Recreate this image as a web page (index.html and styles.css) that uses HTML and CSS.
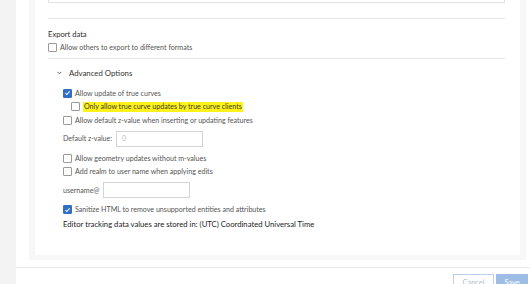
FILE: index.html
```html
<!DOCTYPE html>
<html lang="en">
<head>
  <meta charset="UTF-8" />
  <title>Layer settings</title>
  <link rel="stylesheet" href="styles.css">
</head>
<body>
  <div class="layout">
    <div class="sidebar"></div>

    <div class="main">
      <div class="panel">
        <!-- previous field, scrolled out of view -->
        <div class="field-box"></div>
        <div class="divider first"></div>

        <!-- Export data -->
        <div class="section-title">Export data</div>
        <label class="opt"><span class="box"></span>Allow others to export to different formats</label>
        <div class="divider second"></div>

        <!-- Advanced Options -->
        <div class="adv-head">
          <svg class="chev" width="5" height="4" viewBox="0 0 5 4"><polyline points="0.5,0.8 2.5,2.8 4.5,0.8" fill="none" stroke="#555" stroke-width="0.9"/></svg>
          <span>Advanced Options</span>
        </div>

        <div class="adv">
          <label class="opt r1"><span class="box checked"><svg width="8" height="8" viewBox="0 0 8 8"><polyline points="1.6,4.2 3.2,5.8 6.4,2.2" fill="none" stroke="#fff" stroke-width="1.2"/></svg></span>Allow update of true curves</label>
          <label class="opt sub"><span class="box"></span><span class="hl">Only allow true curve updates by true curve clients</span></label>
          <label class="opt"><span class="box"></span>Allow default z-value when inserting or updating features</label>

          <div class="input-row zrow">
            <span class="input-label">Default z-value:</span>
            <span class="input z"><span class="ph">0</span></span>
          </div>

          <label class="opt mrow"><span class="box"></span>Allow geometry updates without m-values</label>
          <label class="opt"><span class="box"></span>Add realm to user name when applying edits</label>

          <div class="input-row urow">
            <span class="input-label">username@</span>
            <span class="input user"></span>
          </div>

          <label class="opt srow"><span class="box checked"><svg width="8" height="8" viewBox="0 0 8 8"><polyline points="1.6,4.2 3.2,5.8 6.4,2.2" fill="none" stroke="#fff" stroke-width="1.2"/></svg></span>Sanitize HTML to remove unsupported entities and attributes</label>
          <div class="note">Editor tracking data values are stored in: (UTC) Coordinated Universal Time</div>
        </div>
      </div>

      <div class="footer">
        <button class="btn cancel">Cancel</button>
        <button class="btn save">Save</button>
      </div>
    </div>
  </div>
</body>
</html>
```

FILE: styles.css
```css
body, html {
  margin: 0;
  padding: 0;
  font-family: Lato, "Noto Sans", Arial, sans-serif;
  background-color: #fff;
  color: #4a4a4a;
}

body {
  width: 530px;
  height: 284px;
  overflow: hidden;
}

.layout {
  display: flex;
  height: 284px;
}

.sidebar {
  width: 16px;
  background-color: #f3f3f3;
}

.main {
  flex: 1;
  display: flex;
  flex-direction: column;
  padding: 0 4px 0 13px;
}

.panel {
  border: 6px solid #f7f7f7;
  border-top: none;
  border-bottom-width: 5px;
  padding: 0 15px 24px 13px;
}

.field-box {
  height: 2px;
  border: 1px solid #e2e2e2;
  border-top: none;
}

.divider {
  height: 1px;
  background-color: #e6e6e6;
}

.divider.first {
  margin-top: 15px;
}

.divider.second {
  margin-top: 3px;
}

.section-title {
  margin-top: 8px;
  height: 14px;
  line-height: 14px;
  font-size: 7.6px;
  color: #2b2b2b;
}

.opt {
  display: flex;
  align-items: center;
  height: 13.5px;
  font-size: 7.1px;
  color: #555;
}

.box {
  width: 7px;
  height: 7px;
  border: 1px solid #9a9a9a;
  border-radius: 1px;
  margin-right: 3px;
  flex-shrink: 0;
  background: #fff;
  display: flex;
  align-items: center;
  justify-content: center;
}

.box.checked {
  background-color: #2f6fc4;
  border-color: #2f6fc4;
}

.adv-head {
  margin-top: 7px;
  height: 14px;
  display: flex;
  align-items: center;
  font-size: 7.8px;
  color: #333;
  padding-left: 9px;
}

.chev {
  margin-right: 7px;
  margin-top: 1px;
}

.adv {
  padding-left: 15px;
}

.opt.r1 {
  margin-top: 7px;
}

.opt.sub {
  padding-left: 8px;
}

.hl {
  background-color: #fff21a;
  color: #3a3a2a;
  padding: 0 1px;
  line-height: 10px;
}

.input-row {
  display: flex;
  align-items: center;
  font-size: 7.1px;
  color: #555;
}

.zrow {
  margin-top: 3.5px;
}

.urow {
  margin-top: 3.5px;
}

.input-label {
  margin-right: 4px;
}

.input {
  display: block;
  height: 14px;
  border: 1px solid #d4d4d4;
  background: #fff;
  font-size: 7.1px;
  line-height: 14px;
}

.input.z {
  width: 85px;
}

.input.user {
  width: 85px;
}

.ph {
  padding-left: 5px;
  color: #b8b8b8;
}

.opt.mrow {
  margin-top: 5px;
}

.opt.srow {
  margin-top: 5px;
}

.note {
  height: 14px;
  line-height: 14px;
  font-size: 7.7px;
  color: #222;
}

.footer {
  margin-top: 7px;
  border-top: 1px solid #e9e9e9;
  margin-left: -13px;
  margin-right: -4px;
  padding: 6px 2px 0 0;
  display: flex;
  justify-content: flex-end;
  gap: 2px;
}

.btn {
  height: 18px;
  font-family: inherit;
  font-size: 7.4px;
  padding: 0;
  border-radius: 0;
  cursor: pointer;
}

.btn.cancel {
  width: 41px;
  background: #fff;
  border: 1px solid #b9d0ee;
  color: #a6bcd8;
}

.btn.save {
  width: 32px;
  background: #9dbde6;
  border: 1px solid #9dbde6;
  color: #fff;
}
```
